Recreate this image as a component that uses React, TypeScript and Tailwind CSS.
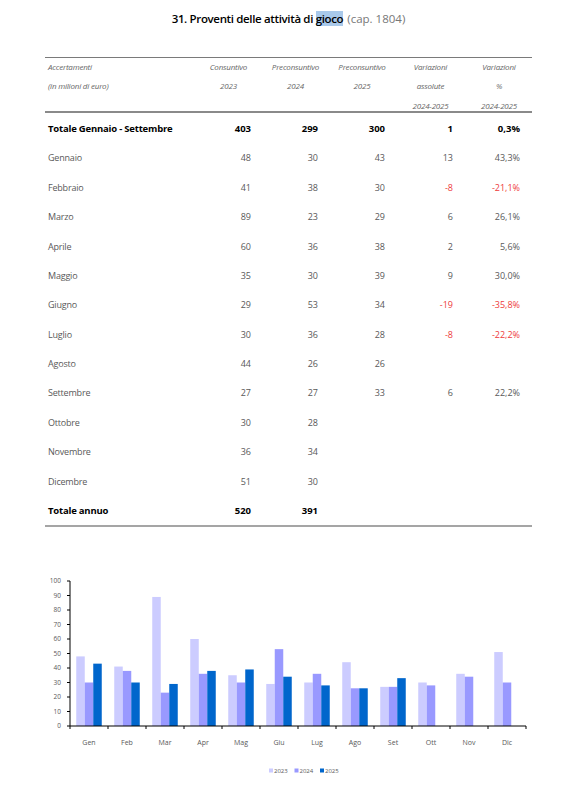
import React from "react";

const font = { fontFamily: '"Open Sans", "Noto Sans", sans-serif' };

type Row = { label: string; v: (string | number)[]; bold?: boolean };

const rows: Row[] = [
  { label: "Totale Gennaio - Settembre", v: [403, 299, 300, 1, "0,3%"], bold: true },
  { label: "Gennaio", v: [48, 30, 43, 13, "43,3%"] },
  { label: "Febbraio", v: [41, 38, 30, -8, "-21,1%"] },
  { label: "Marzo", v: [89, 23, 29, 6, "26,1%"] },
  { label: "Aprile", v: [60, 36, 38, 2, "5,6%"] },
  { label: "Maggio", v: [35, 30, 39, 9, "30,0%"] },
  { label: "Giugno", v: [29, 53, 34, -19, "-35,8%"] },
  { label: "Luglio", v: [30, 36, 28, -8, "-22,2%"] },
  { label: "Agosto", v: [44, 26, 26, "", ""] },
  { label: "Settembre", v: [27, 27, 33, 6, "22,2%"] },
  { label: "Ottobre", v: [30, 28, "", "", ""] },
  { label: "Novembre", v: [36, 34, "", "", ""] },
  { label: "Dicembre", v: [51, 30, "", "", ""] },
  { label: "Totale annuo", v: [520, 391, "", "", ""], bold: true },
];

const colWidths = ["w-[150px]", "w-[67px]", "w-[67px]", "w-[66px]", "w-[71px]", "w-[66px]"];
const valPad = ["pr-[11px]", "pr-[11px]", "pr-[10px]", "pr-[13px]", "pr-[12px]"];

const header: string[][] = [
  ["Accertamenti", "Consuntivo", "Preconsuntivo", "Preconsuntivo", "Variazioni", "Variazioni"],
  ["(in milioni di euro)", "2023", "2024", "2025", "assolute", "%"],
  ["", "", "", "", "2024-2025", "2024-2025"],
];

const months = ["Gen", "Feb", "Mar", "Apr", "Mag", "Giu", "Lug", "Ago", "Set", "Ott", "Nov", "Dic"];
const data: (number | null)[][] = [
  [48, 30, 43],
  [41, 38, 30],
  [89, 23, 29],
  [60, 36, 38],
  [35, 30, 39],
  [29, 53, 34],
  [30, 36, 28],
  [44, 26, 26],
  [27, 27, 33],
  [30, 28, null],
  [36, 34, null],
  [51, 30, null],
];
const colors = ["#ccccff", "#9999ff", "#0066cc"];

function Chart() {
  const x0 = 70;
  const yBase = 725;
  const scale = 1.45;
  const cw = 38;
  const bw = 8.5;
  return (
    <svg width="575" height="229" viewBox="0 560 575 229" style={font} className="block">
      {data.map((g, i) =>
        g.map((v, j) =>
          v === null ? null : (
            <rect
              key={`${i}-${j}`}
              x={x0 + i * cw + 6.25 + j * bw}
              y={yBase - v * scale}
              width={bw}
              height={v * scale}
              fill={colors[j]}
            />
          )
        )
      )}
      <line x1={x0} y1={580} x2={x0} y2={yBase} stroke="#000" strokeWidth="1" />
      <line x1={x0} y1={yBase} x2={x0 + 12 * cw} y2={yBase} stroke="#000" strokeWidth="1" />
      {Array.from({ length: 11 }).map((_, k) => {
        const y = yBase - k * 10 * scale;
        return (
          <g key={k}>
            <line x1={x0 - 3} y1={y} x2={x0} y2={y} stroke="#000" strokeWidth="1" />
            <text x={61} y={y + 2.3} fontSize="6.5" fill="#595959" textAnchor="end">
              {k * 10}
            </text>
          </g>
        );
      })}
      {Array.from({ length: 13 }).map((_, k) => (
        <line key={k} x1={x0 + k * cw} y1={yBase} x2={x0 + k * cw} y2={yBase + 3} stroke="#000" strokeWidth="1" />
      ))}
      {months.map((m, i) => (
        <text key={m} x={x0 + i * cw + cw / 2} y={743.5} fontSize="7" fill="#595959" textAnchor="middle">
          {m}
        </text>
      ))}
      {["2023", "2024", "2025"].map((l, i) => (
        <g key={l}>
          <rect x={269 + i * 25.5} y={767.5} width={4} height={4} fill={colors[i]} />
          <text x={274 + i * 25.5} y={772} fontSize="6" fill="#595959">
            {l}
          </text>
        </g>
      ))}
    </svg>
  );
}

export default function App() {
  return (
    <div className="w-[575px] h-[789px] bg-white overflow-hidden" style={font}>
      <div className="h-[37px] flex items-center justify-center text-[11.5px] pl-[2px] pt-[1px]">
        <span className="font-semibold text-black tracking-[-0.35px]">
          31. Proventi delle attività di <span className="bg-[#a9c9ea]">gioco</span>
        </span>
        <span className="text-[#777] ml-[4px]">(cap. 1804)</span>
      </div>
      <div className="mx-[45px] mt-[20px] w-[487px]">
        <div className="h-px bg-[#7a7a7a]" />
        <div className="h-[54px]">
          <div className="-mt-[1px]">
            {header.map((hr, ri) => (
              <div key={ri} className="flex h-[19.5px] items-center text-[8px] italic text-[#666]">
                {hr.map((c, ci) => (
                  <div
                    key={ci}
                    className={`${colWidths[ci]} ${ci === 0 ? "pl-[3px] text-left" : "text-center"} whitespace-nowrap tracking-[-0.2px]`}
                  >
                    {c}
                  </div>
                ))}
              </div>
            ))}
          </div>
        </div>
        <div className="h-[2px] bg-[#8a8a8a]" />
        <div className="pt-[1px]">
          {rows.map((r, ri) => (
            <div
              key={ri}
              className={`flex h-[29.4px] items-center ${r.bold ? "text-[9.5px] font-bold text-black" : "text-[9px] text-[#595959]"}`}
            >
              <div className={`${colWidths[0]} pl-[3px] whitespace-nowrap tracking-[-0.2px]`}>{r.label}</div>
              {r.v.map((v, ci) => {
                const neg = typeof v === "number" ? v < 0 : String(v).startsWith("-");
                return (
                  <div
                    key={ci}
                    className={`${colWidths[ci + 1]} ${valPad[ci]} text-right whitespace-nowrap ${neg ? "text-[#ee3b3b]" : ""}`}
                  >
                    {v}
                  </div>
                );
              })}
            </div>
          ))}
        </div>
        <div className="h-[2px] bg-[#a5a5a5]" />
      </div>
      <div className="mt-[34px]">
        <Chart />
      </div>
    </div>
  );
}
